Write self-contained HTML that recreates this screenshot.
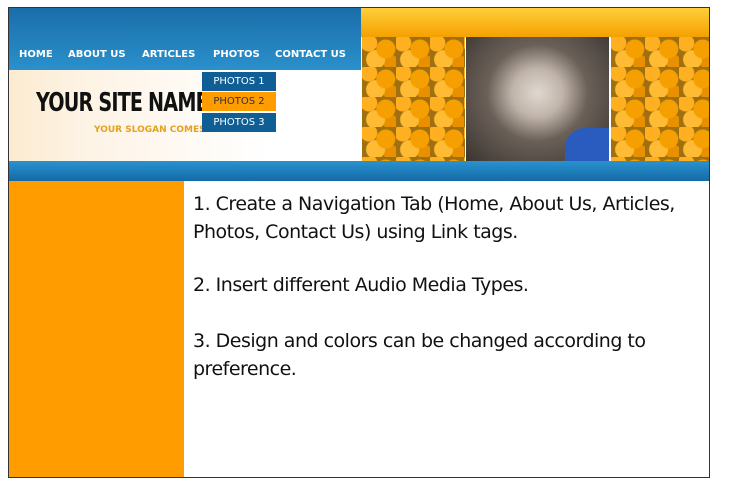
<!DOCTYPE html>
<html><head><style>
body{margin:0;width:738px;height:485px;background:#fff;position:relative;overflow:hidden;font-family:"Liberation Sans",sans-serif}
.a{position:absolute}
.nav span{position:absolute;top:49px;color:#fff;font-weight:bold;font-size:10px;font-family:"DejaVu Sans","Liberation Sans",sans-serif}
.dd{position:absolute;left:202px;width:74px;height:19px;font-size:10px;color:#fff;text-align:center;line-height:19px;font-family:"DejaVu Sans",sans-serif}
.fl{background:radial-gradient(circle at 20% 20%,#ffb020 8px,transparent 9px),radial-gradient(circle at 70% 40%,#f5a000 9px,transparent 10px),radial-gradient(circle at 40% 75%,#ffbb33 9px,transparent 10px),radial-gradient(circle at 85% 85%,#e89000 7px,transparent 8px),#a07010;background-size:34px 30px}
p{margin:0}
</style></head><body>
<div class="a" style="left:8px;top:7px;width:702px;height:471px;border:1px solid #333;box-sizing:border-box"></div>
<div class="a" style="left:9px;top:8px;width:352px;height:62px;background:linear-gradient(#1a6ea8,#2a90cc)"></div>
<div class="a" style="left:9px;top:70px;width:352px;height:91px;background:linear-gradient(90deg,#fcebd0 0,#fdf3e4 70px,#fff 260px)"></div>
<div class="a" style="left:361px;top:8px;width:348px;height:29px;background:linear-gradient(#ffcf3a,#f5a000)"></div>
<div class="a fl" style="left:362px;top:37px;width:103px;height:124px"></div>
<div class="a" style="left:466px;top:37px;width:143px;height:124px;background:radial-gradient(ellipse at 50% 45%,#e0d8d0 0,#c0b4aa 25%,#6a6058 50%,#3a3430 100%)"></div>
<div class="a" style="left:565px;top:128px;width:44px;height:33px;background:#2a5cc0;border-radius:20px 0 0 0"></div>
<div class="a fl" style="left:611px;top:37px;width:98px;height:124px"></div>
<div class="a" style="left:9px;top:161px;width:700px;height:20px;background:linear-gradient(#2a92d0,#136aa6)"></div>
<div class="a" style="left:9px;top:181px;width:175px;height:296px;background:#ff9c00"></div>
<div class="nav"><span style="left:19px">HOME</span><span style="left:68px">ABOUT US</span><span style="left:142px">ARTICLES</span><span style="left:213px">PHOTOS</span><span style="left:275px">CONTACT US</span></div>
<div class="a" style="left:36px;top:88px;font-size:26px;font-weight:bold;letter-spacing:-1px;transform:scaleX(0.82);transform-origin:left;color:#111;font-family:'DejaVu Sans Condensed','Liberation Sans Narrow',sans-serif">YOUR SITE NAME</div>
<div class="a" style="left:94px;top:125px;font-size:9px;font-weight:bold;color:#e6a020;font-family:'DejaVu Sans',sans-serif">YOUR SLOGAN COMES HERE</div>
<div class="dd" style="top:72px;background:#0f5f96">PHOTOS 1</div>
<div class="dd" style="top:92px;background:#ff9c00;color:#333">PHOTOS 2</div>
<div class="dd" style="top:113px;background:#0f5f96">PHOTOS 3</div>
<div class="a" style="left:193px;top:190px;width:510px;font-size:19px;line-height:28px;color:#111;font-family:'DejaVu Sans','Liberation Sans',sans-serif;letter-spacing:-0.5px">
<p>1. Create a Navigation Tab (Home, About Us, Articles, Photos, Contact Us) using Link tags.</p><br>
<p style="margin-top:-3px">2. Insert different Audio Media Types.</p><br>
<p>3. Design and colors can be changed according to preference.</p>
</div>
</body></html>
